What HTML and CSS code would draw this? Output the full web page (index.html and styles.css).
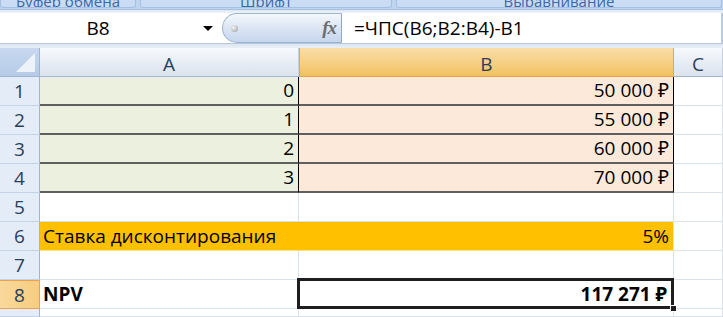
FILE: index.html
```html
<!DOCTYPE html>
<html lang="ru">
<head>
  <meta charset="UTF-8" />
  <title>ЧПС</title>
  <link rel="stylesheet" href="styles.css">
</head>
<body>
  <!-- нижний край ленты -->
  <div class="ribbon">
    <div class="group g1"><span>Буфер обмена</span></div>
    <div class="group g2"><span>Шрифт</span></div>
    <div class="group g3"><span>Выравнивание</span></div>
  </div>
  <div class="ribbon-edge"></div>

  <!-- строка формул -->
  <div class="fbar">
    <div class="namebox">
      <span class="name">B8</span>
      <span class="arrow"></span>
    </div>
    <div class="fxbtn">
      <span class="dot"></span>
      <span class="fx">fx</span>
    </div>
    <div class="formula">=ЧПС(B6;B2:B4)-B1</div>
  </div>
  <div class="fbar-edge"></div>

  <!-- лист -->
  <div class="sheet">
    <div class="corner"><span class="tri"></span></div>
    <div class="colhead">A</div>
    <div class="colhead active">B</div>
    <div class="colhead">C</div>

    <div class="rowhead">1</div>
    <div class="cell green num dark">0</div>
    <div class="cell peach num dark">50 000 ₽</div>
    <div class="cell"></div>

    <div class="rowhead">2</div>
    <div class="cell green num dark">1</div>
    <div class="cell peach num dark">55 000 ₽</div>
    <div class="cell"></div>

    <div class="rowhead">3</div>
    <div class="cell green num dark">2</div>
    <div class="cell peach num dark">60 000 ₽</div>
    <div class="cell"></div>

    <div class="rowhead">4</div>
    <div class="cell green num dark">3</div>
    <div class="cell peach num dark">70 000 ₽</div>
    <div class="cell"></div>

    <div class="rowhead">5</div>
    <div class="cell"></div>
    <div class="cell"></div>
    <div class="cell"></div>

    <div class="rowhead">6</div>
    <div class="cell amber">Ставка дисконтирования</div>
    <div class="cell amber num">5%</div>
    <div class="cell"></div>

    <div class="rowhead">7</div>
    <div class="cell"></div>
    <div class="cell"></div>
    <div class="cell"></div>

    <div class="rowhead active">8</div>
    <div class="cell bold">NPV</div>
    <div class="cell num bold sel">117 271 ₽<span class="handle"></span></div>
    <div class="cell"></div>

    <div class="rowhead"></div>
    <div class="cell"></div>
    <div class="cell"></div>
    <div class="cell"></div>
  </div>
</body>
</html>
```

FILE: styles.css
```css
* {
  margin: 0;
  padding: 0;
  box-sizing: border-box;
}

body {
  width: 723px;
  height: 317px;
  overflow: hidden;
  background: #fff;
  font-family: "Open Sans", "Noto Sans", "DejaVu Sans", sans-serif;
  color: #000;
}

/* лента */
.ribbon {
  height: 9px;
  display: flex;
  background: #bfd4ef;
  overflow: hidden;
}

.ribbon .group {
  height: 8px;
  margin-right: 4px;
  background: #c9dcf3;
  border: 1px solid #a6c0e3;
  border-top: none;
  border-radius: 0 0 3px 3px;
  display: flex;
  justify-content: center;
  align-items: flex-end;
  overflow: hidden;
}

.ribbon .group span {
  font-size: 15px;
  line-height: 15px;
  margin-bottom: -2px;
  color: #3c67a8;
  white-space: nowrap;
}

.g1 {
  width: 136px;
}

.g2 {
  width: 252px;
}

.g3 {
  flex: 1;
  margin-right: 1px !important;
}

.ribbon-edge {
  height: 4px;
  background: linear-gradient(#a7c0e0 0, #a7c0e0 1px, #dce7f5 1px, #eef3fa 100%);
}

/* строка формул */
.fbar {
  height: 30px;
  display: flex;
  background: #fff;
  border-right: 2px solid #b9cbe2;
}

.namebox {
  width: 222px;
  display: flex;
  align-items: center;
}

.namebox .name {
  width: 196px;
  text-align: center;
  font-size: 19px;
}

.namebox .arrow {
  margin-left: 7px;
  width: 0;
  height: 0;
  border-left: 5px solid transparent;
  border-right: 5px solid transparent;
  border-top: 5px solid #000;
}

.fxbtn {
  width: 120px;
  height: 30px;
  display: flex;
  align-items: center;
  justify-content: space-between;
  padding: 0 5px 0 8px;
  border: 1px solid #9db3cf;
  border-right-color: #8fa6c4;
  border-radius: 15px 0 0 15px;
  background: linear-gradient(#f5f8fc, #dde7f4 45%, #c6d6ec);
}

.fxbtn .dot {
  width: 7px;
  height: 7px;
  border-radius: 50%;
  background: radial-gradient(circle at 35% 35%, #f4f4f4, #9a9a9a);
}

.fxbtn .fx {
  font-family: "Liberation Serif", serif;
  font-style: italic;
  font-weight: bold;
  font-size: 19px;
  color: #6d6d6d;
  letter-spacing: -1px;
}

.formula {
  flex: 1;
  display: flex;
  align-items: center;
  padding-left: 12px;
  font-size: 19px;
}

.fbar-edge {
  height: 5px;
  background: linear-gradient(#b5c8df 0, #b5c8df 1px, #dde6f1 1px, #e9eff7 100%);
}

/* лист */
.sheet {
  display: grid;
  grid-template-columns: 40px 259px 375px 49px;
  grid-template-rows: repeat(9, 29px) 8px;
  height: 269px;
  overflow: hidden;
  font-size: 19px;
}

.corner {
  background: linear-gradient(#c7d8ef, #b6cbe8);
  border-right: 1px solid #9eb6d4;
  border-bottom: 1px solid #9eb6d4;
  display: flex;
  align-items: flex-end;
  justify-content: flex-end;
  padding: 0 4px 4px 0;
}

.corner .tri {
  width: 0;
  height: 0;
  border-left: 19px solid transparent;
  border-bottom: 19px solid #eef3fa;
}

.colhead {
  display: flex;
  align-items: center;
  justify-content: center;
  padding-top: 3px;
  color: #27405e;
  background: linear-gradient(#f7f9fc, #e6ecf4 55%, #dbe3ee);
  border-right: 1px solid #c5d2e3;
  border-bottom: 1px solid #9eb6d4;
}

.colhead.active {
  background: linear-gradient(#f9dea8, #f6cf83 55%, #f1c15f);
  border-right-color: #f0a04a;
  border-left: 1px solid #f0a04a;
  border-bottom-color: #f0a04a;
}

.rowhead {
  display: flex;
  align-items: center;
  justify-content: center;
  color: #27405e;
  background: #e4ecf7;
  border-right: 1px solid #9eb6d4;
  border-bottom: 1px solid #c5d3e6;
}

.rowhead.active {
  background: linear-gradient(90deg, #f9d99b, #f7cd80);
  border-color: #f0a04a;
  border-top: 1px solid #f0a04a;
}

.cell {
  position: relative;
  display: flex;
  align-items: flex-end;
  padding: 0 4px 1px 3px;
  white-space: nowrap;
  border-right: 1px solid #dae2ed;
  border-bottom: 1px solid #dae2ed;
}

.num {
  justify-content: flex-end;
}

.green {
  background: #ebf1de;
}

.peach {
  background: #fde9d9;
}

.dark {
  border-right: 1px solid #000;
  border-bottom: 2px solid #5f5f5f;
}

.amber {
  background: #ffc000;
  border-right-color: #ffc000;
  border-bottom-color: #ffe08a;
}

.amber.num {
  border-right-color: #dae2ed;
}

.bold {
  font-weight: bold;
}

.sel {
  padding-right: 6px;
}

.sel::after {
  content: "";
  position: absolute;
  left: -2px;
  top: -2px;
  right: -1px;
  bottom: -1px;
  border: 3px solid #1e1e1e;
}

.sel .handle {
  position: absolute;
  right: -4px;
  bottom: -4px;
  width: 7px;
  height: 7px;
  background: #1e1e1e;
  border: 1px solid #fff;
  z-index: 2;
}
```
